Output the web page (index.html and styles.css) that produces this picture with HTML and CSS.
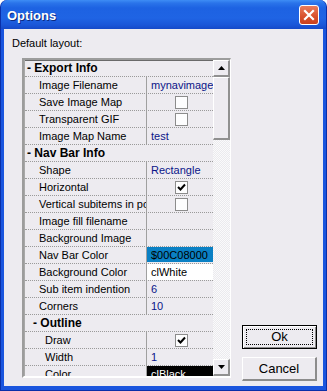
FILE: index.html
```html
<!DOCTYPE html>
<html>
<head>
  <title>Options</title>
  <link rel="stylesheet" href="styles.css">
</head>
<body>
  <div class="window">
    <div class="titlebar">
      <span class="title">Options</span>
      <span class="close">
        <svg width="18" height="18" viewBox="0 0 18 18"><path d="M5 5 L13 13 M13 5 L5 13" stroke="#fff" stroke-width="2.2" stroke-linecap="square"/></svg>
      </span>
    </div>
    <div class="client">
      <div class="label">Default layout:</div>
      <div class="main">
        <div class="grid">
          <div class="rows">
            <div class="row head first">- Export Info</div>
            <div class="row"><span class="name">Image Filename</span><span class="value">mynavimage.gif</span></div>
            <div class="row"><span class="name">Save Image Map</span><span class="value center"><span class="check"></span></span></div>
            <div class="row"><span class="name">Transparent GIF</span><span class="value center"><span class="check"></span></span></div>
            <div class="row"><span class="name">Image Map Name</span><span class="value">test</span></div>
            <div class="row head">- Nav Bar Info</div>
            <div class="row"><span class="name">Shape</span><span class="value">Rectangle</span></div>
            <div class="row"><span class="name">Horizontal</span><span class="value center"><span class="check on"><svg width="11" height="11" viewBox="0 0 11 11"><path d="M2 5 L4.5 7.5 L9 2.5" fill="none" stroke="#000" stroke-width="2"/></svg></span></span></div>
            <div class="row"><span class="name">Vertical subitems in popup</span><span class="value center"><span class="check"></span></span></div>
            <div class="row"><span class="name">Image fill filename</span><span class="value"></span></div>
            <div class="row"><span class="name">Background Image</span><span class="value"></span></div>
            <div class="row"><span class="name">Nav Bar Color</span><span class="value sel">$00C08000</span></div>
            <div class="row"><span class="name">Background Color</span><span class="value white">clWhite</span></div>
            <div class="row"><span class="name">Sub item indention</span><span class="value">6</span></div>
            <div class="row"><span class="name">Corners</span><span class="value">10</span></div>
            <div class="row head sub">- Outline</div>
            <div class="row"><span class="name sub">Draw</span><span class="value center"><span class="check on"><svg width="11" height="11" viewBox="0 0 11 11"><path d="M2 5 L4.5 7.5 L9 2.5" fill="none" stroke="#000" stroke-width="2"/></svg></span></span></div>
            <div class="row"><span class="name sub">Width</span><span class="value">1</span></div>
            <div class="row"><span class="name sub">Color</span><span class="value black">clBlack</span></div>
          </div>
          <div class="scrollbar">
            <div class="sbtn"><svg width="7" height="4" viewBox="0 0 7 4"><path d="M3.5 0 L7 4 L0 4 Z" fill="#000"/></svg></div>
            <div class="thumb"></div>
            <div class="track"></div>
            <div class="sbtn"><svg width="7" height="4" viewBox="0 0 7 4"><path d="M0 0 L7 0 L3.5 4 Z" fill="#000"/></svg></div>
          </div>
        </div>
        <div class="buttons">
          <button class="btn default"><span>Ok</span></button>
          <button class="btn"><span>Cancel</span></button>
        </div>
      </div>
    </div>
  </div>
</body>
</html>
```
FILE: styles.css
```css
body {
  margin: 0;
  padding: 0;
  background-color: #fff;
  font-family: "Liberation Sans", Arial, sans-serif;
  font-size: 11px;
}

.window {
  width: 327px;
  height: 391px;
  display: flex;
  flex-direction: column;
  box-sizing: border-box;
  background-color: #1a55de;
  border-radius: 7px 7px 0 0;
  border: 1px solid #0a2fa8;
  border-top: none;
}

.titlebar {
  height: 29px;
  flex: none;
  display: flex;
  align-items: center;
  justify-content: space-between;
  padding: 0 6px 0 6px;
  border-radius: 7px 7px 0 0;
  background: linear-gradient(#3e8df5 0, #2a74ea 3px, #1d62e2 8px, #1f64e4 18px, #1a56d8 25px, #1549c8 29px);
}

.title {
  color: #fff;
  font-weight: bold;
  font-size: 13px;
  text-shadow: 1px 1px #0c2a80;
  padding-top: 2px;
}

.close {
  width: 18px;
  height: 18px;
  margin-top: 1px;
  margin-right: 1px;
  border: 1px solid #fff;
  border-radius: 3px;
  background: linear-gradient(#e97c5c, #d8502c 60%, #c8401e);
}

.close svg {
  display: block;
}

.client {
  flex: 1;
  display: flex;
  flex-direction: column;
  margin: 0 3px 4px 3px;
  padding: 8px 6px 5px 8px;
  background-color: #edebf0;
}

.label {
  line-height: 13px;
  color: #000;
}

.main {
  flex: 1;
  display: flex;
  margin-top: 8px;
}

.grid {
  width: 213px;
  height: 320px;
  box-sizing: border-box;
  margin-left: 10px;
  display: flex;
  border-top: 2px solid #9c9c9c;
  border-left: 2px solid #9c9c9c;
  border-bottom: 2px solid #fff;
  border-right: 1px solid #fff;
  overflow: hidden;
}

.rows {
  width: 193px;
  overflow: hidden;
  border-left: 1px solid #a8a8a8;
  box-sizing: border-box;
}

.row {
  height: 17px;
  box-sizing: border-box;
  display: flex;
  border-bottom: 1px dotted #9a9a9a;
  line-height: 16px;
  white-space: nowrap;
}

.row.head {
  font-weight: bold;
  padding-left: 2px;
  font-size: 12px;
}

.row.first {
  border-top: 1px solid #6a6a6a;
  line-height: 15px;
}

.row.head.sub {
  padding-left: 8px;
}

.name {
  width: 107px;
  flex: none;
  padding-left: 14px;
  overflow: hidden;
  border-right: 1px solid #a0a0a0;
}

.name.sub {
  width: 101px;
  padding-left: 20px;
}

.value {
  flex: 1;
  padding-left: 4px;
  overflow: hidden;
  color: #0a1488;
}

.value.center {
  display: flex;
  align-items: center;
  justify-content: center;
  padding-left: 0;
}

.value.sel {
  background-color: #0a80c4;
  color: #000;
  margin-bottom: 1px;
}

.value.white {
  background-color: #fff;
  color: #000;
}

.value.black {
  background-color: #000;
  color: #fff;
}

.check {
  width: 13px;
  height: 13px;
  box-sizing: border-box;
  border: 1px solid #8c8c8c;
  background-color: #fdfdfe;
  margin-left: 2px;
}

.check svg {
  display: block;
}

.scrollbar {
  width: 17px;
  display: flex;
  flex-direction: column;
}

.sbtn, .thumb {
  box-sizing: border-box;
  background-color: #edebf0;
  border-top: 1px solid #fff;
  border-left: 1px solid #fff;
  border-right: 2px solid #909090;
  border-bottom: 2px solid #909090;
}

.sbtn {
  height: 17px;
  display: flex;
  align-items: center;
  justify-content: center;
}

.thumb {
  height: 63px;
}

.track {
  flex: 1;
  background-color: #f4f3f6;
  background-image: conic-gradient(#fafafb 25%, #ebeaee 0 50%, #fafafb 0 75%, #ebeaee 0);
  background-size: 2px 2px;
}

.buttons {
  display: flex;
  flex-direction: column;
  justify-content: flex-end;
  gap: 8px;
  margin-left: 11px;
}

.btn {
  width: 75px;
  height: 24px;
  padding: 0;
  box-sizing: border-box;
  font-family: "Liberation Sans", Arial, sans-serif;
  font-size: 13px;
  color: #000;
  background-color: #edebf0;
  border-top: 1px solid #fff;
  border-left: 1px solid #fff;
  border-right: 2px solid #8c8c8c;
  border-bottom: 2px solid #8c8c8c;
}

.btn.default {
  border: 1px solid #000;
  box-shadow: inset 1px 1px #fff, inset -1px -1px #8c8c8c;
  padding: 3px;
}

.btn.default span {
  display: block;
  height: 100%;
  box-sizing: border-box;
  border: 1px dotted #000;
  line-height: 14px;
}
```
